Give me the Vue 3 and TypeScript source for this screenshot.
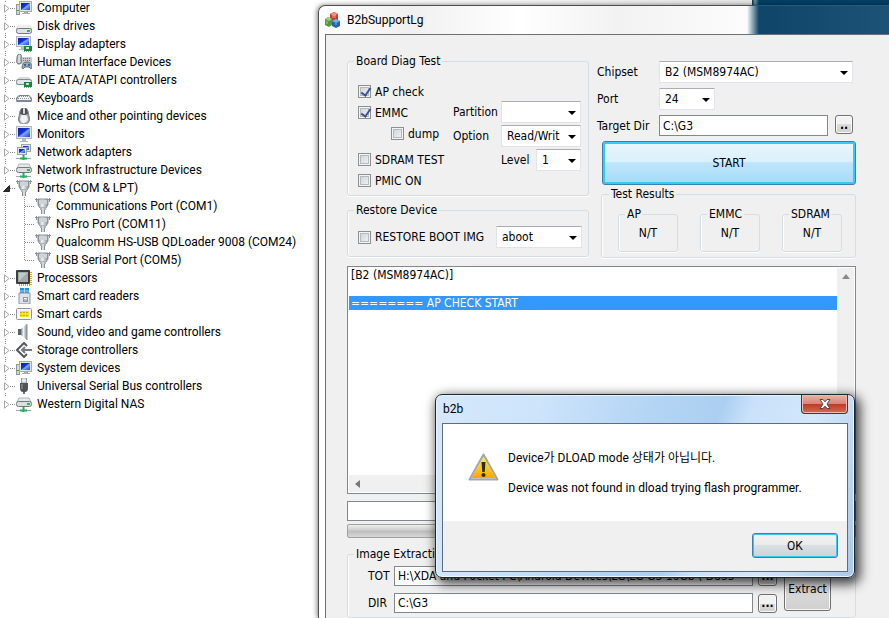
<script setup lang="ts">
import { ref } from 'vue'

interface Device {
  name: string
  icon: string
  children?: string[]
}

const devices: Device[] = [
  { name: 'Computer', icon: 'computer' },
  { name: 'Disk drives', icon: 'disk' },
  { name: 'Display adapters', icon: 'display' },
  { name: 'Human Interface Devices', icon: 'hid' },
  { name: 'IDE ATA/ATAPI controllers', icon: 'ide' },
  { name: 'Keyboards', icon: 'keyboard' },
  { name: 'Mice and other pointing devices', icon: 'mouse' },
  { name: 'Monitors', icon: 'monitor' },
  { name: 'Network adapters', icon: 'network' },
  { name: 'Network Infrastructure Devices', icon: 'netdrive' },
  {
    name: 'Ports (COM & LPT)',
    icon: 'port',
    children: [
      'Communications Port (COM1)',
      'NsPro Port (COM11)',
      'Qualcomm HS-USB QDLoader 9008 (COM24)',
      'USB Serial Port (COM5)',
    ],
  },
  { name: 'Processors', icon: 'cpu' },
  { name: 'Smart card readers', icon: 'reader' },
  { name: 'Smart cards', icon: 'card' },
  { name: 'Sound, video and game controllers', icon: 'sound' },
  { name: 'Storage controllers', icon: 'storage' },
  { name: 'System devices', icon: 'computer' },
  { name: 'Universal Serial Bus controllers', icon: 'usb' },
  { name: 'Western Digital NAS', icon: 'netdrive' },
]

const results = ['AP', 'EMMC', 'SDRAM']
const apCheck = ref(true)
const emmc = ref(true)
const dump = ref(false)
const sdram = ref(false)
const pmic = ref(false)
const restore = ref(false)
const targetDir = ref('C:\\G3')
const command = ref('')
const totPath = ref('H:\\XDA and Pocket PC\\Android Devices\\LG\\LG G3 16Gb ( D855')
const outDir = ref('C:\\G3')
</script>

<template>
  <svg class="defs" aria-hidden="true">
    <defs>
      <linearGradient id="scr" x1="0" y1="0" x2="1" y2="1">
        <stop offset="0" stop-color="#0a1fae" /><stop offset=".45" stop-color="#1437d6" />
        <stop offset=".55" stop-color="#7fa8f5" /><stop offset="1" stop-color="#1a3fd8" />
      </linearGradient>
      <linearGradient id="metal" x1="0" y1="0" x2="1" y2="0">
        <stop offset="0" stop-color="#7b838a" /><stop offset=".4" stop-color="#f2f5f7" /><stop offset="1" stop-color="#858c92" />
      </linearGradient>
      <linearGradient id="warn" x1="0" y1="0" x2="0" y2="1">
        <stop offset="0" stop-color="#fff03a" /><stop offset="1" stop-color="#f9a800" />
      </linearGradient>
    </defs>
    <symbol id="monitor" viewBox="0 0 16 16">
      <rect x=".5" y=".5" width="15" height="12" fill="#e4e6e8" stroke="#b4b8bb" />
      <rect x="2" y="2" width="12" height="9" fill="url(#scr)" />
      <path d="M6 13h4v2h2v1H4v-1h2z" fill="#b5babd" />
    </symbol>
    <symbol id="computer" viewBox="0 0 16 16">
      <rect x=".5" y="4.500" width="3" height="10" fill="#d4d8da" stroke="#8e9599" />
      <rect x="1" y="10" width="2" height="1" fill="#27a84a" />
      <rect x="3.500" y="1.500" width="12" height="10" fill="#e2e5e7" stroke="#a6abb0" />
      <rect x="5" y="3" width="9" height="7" fill="url(#scr)" />
      <path d="M8 12h4v1h2v1H6v-1h2z" fill="#a9aeb2" />
    </symbol>
    <symbol id="disk" viewBox="0 0 16 16">
      <path d="M3 7h10l3 3v5H0v-5z" fill="#ccd0d2" />
      <path d="M3 7h10l2 3H1z" fill="#eceeef" />
      <rect x=".5" y="10.500" width="15" height="5" rx="2" fill="#dfe2e3" stroke="#74797d" />
      <rect x="11" y="12" width="3" height="2" fill="#21c13b" />
    </symbol>
    <symbol id="chip" viewBox="0 0 16 16">
      <rect x="8" y="10" width="8" height="5" fill="#168743" />
      <rect x="10" y="11" width="3" height="2" fill="#c7e4cd" />
      <path d="M8 15.500h7" stroke="#9e9b45" stroke-dasharray="1 1" />
    </symbol>
    <symbol id="display" viewBox="0 0 16 16">
      <rect x=".5" y=".5" width="14" height="10" fill="#e4e6e8" stroke="#b4b8bb" />
      <rect x="2" y="2" width="11" height="7" fill="url(#scr)" />
      <path d="M5 11h4v2h2v1H3v-1h2z" fill="#b5babd" />
      <use href="#chip" />
    </symbol>
    <symbol id="ide" viewBox="0 0 16 16">
      <path d="M3 5h10l3 3v5H0V8z" fill="#d9dcde" />
      <rect x=".5" y="7.500" width="15" height="5" rx="2" fill="#e4e6e7" stroke="#83888c" />
      <use href="#chip" />
    </symbol>
    <symbol id="hid" viewBox="0 0 16 16">
      <path d="M6 3h10v7H5z" fill="#c4cacf" />
      <path d="M7 4.500h8M7 6.500h8" stroke="#777e85" stroke-dasharray="1 1" />
      <path d="M1 5Q1 0 3.500 0T5 5q1 5-2 5T1 5z" fill="#d8dadd" stroke="#555a60" />
      <path d="M6 14q0-6 5-6t5 6q-1 2-3-1H9q-2 3-3 1z" fill="#9fa9b2" stroke="#67727c" />
      <path d="M8 11h2M12 11h2" stroke="#2b6ba0" stroke-width="2" />
    </symbol>
    <symbol id="keyboard" viewBox="0 0 16 16">
      <path d="M3 5h10l3 3v2q0 2-1 2H1q-1 0-1-2V8z" fill="#7f868b" />
      <path d="M3 6h10l2 4H1z" fill="#f4f5f6" />
      <path d="M3 6.500h10M2 8.500h12" stroke="#8b9297" stroke-dasharray="1 1" />
    </symbol>
    <symbol id="mouse" viewBox="0 0 16 16">
      <path d="M4 3Q5 0 8 0t4 3l1.500 8q0 5-5.500 5t-5.500-5z" fill="url(#metal)" stroke="#7c8084" />
      <path d="M5 1q3-2 6 0l1 5-3 1H7L4 6z" fill="#4b4f54" />
      <rect x="7" y="0" width="2" height="6" rx="1" fill="#d7dadd" />
      <path d="M5 8q3-2 6 0l1 4q-4 5-8 0z" fill="#eef0f1" />
    </symbol>
    <symbol id="network" viewBox="0 0 16 16">
      <rect x="5.500" y=".5" width="9" height="7" fill="#e4e8ec" stroke="#9ba3aa" />
      <rect x="7" y="2" width="6" height="4" fill="url(#scr)" />
      <rect x="1.500" y="3.500" width="9" height="7" fill="#e4e8ec" stroke="#9ba3aa" />
      <rect x="3" y="5" width="6" height="4" fill="url(#scr)" />
      <path d="M0 14.500h15" stroke="#9fa6a9" /><path d="M7.500 11v5M4 14.500h7" stroke="#22ac62" stroke-width="2" />
    </symbol>
    <symbol id="netdrive" viewBox="0 0 16 16">
      <path d="M3 2h10l2 4H1z" fill="#e6e8e9" stroke="#aeb3b6" />
      <rect x=".5" y="5.500" width="15" height="5" rx="2" fill="#dcdfe1" stroke="#70767a" />
      <rect x="11" y="7" width="3" height="2" fill="#20c13a" />
      <path d="M0 14.500h15" stroke="#9fa6a9" /><path d="M7.500 11v5M4 14.500h7" stroke="#20b060" stroke-width="2" />
    </symbol>
    <symbol id="port" viewBox="0 0 16 16">
      <path d="M0 1.500h16M1.500 0v4M14.500 0v4" stroke="#8b9297" />
      <path d="M3 1h10v6l-2 3H5L3 7z" fill="url(#metal)" stroke="#8c9397" />
      <path d="M4 2h8v4H4z" fill="#cdd3d7" />
      <path d="M5 9h6v3H5z" fill="#adb4b9" /><path d="M6 12h4v4H6z" fill="#8a9196" /><path d="M7 10h2v6H7z" fill="#d3d8db" />
    </symbol>
    <symbol id="cpu" viewBox="0 0 16 16">
      <path d="M15 2v13M3 15h12" stroke="#d0a13d" stroke-width="2" stroke-dasharray="1 1" />
      <rect width="14" height="14" rx="1" fill="#3c3f42" />
      <path d="M2 2h10v10H2z" fill="#a5a9ab" /><path d="M3 3h8L3 11z" fill="#c4c7c9" />
    </symbol>
    <symbol id="reader" viewBox="0 0 16 16">
      <rect x="4" y="0" width="9" height="6" fill="#258fd6" /><path d="M4 3h9M8.500 0v5" stroke="#9ad8fa" />
      <path d="M3 5h11v11H3z" fill="#dfe4e9" stroke="#8795a2" />
      <rect x="7.500" y="9.500" width="4" height="4" fill="#fff" stroke="#8b96a0" /><path d="M8 12h3" stroke="#667481" />
    </symbol>
    <symbol id="card" viewBox="0 0 16 16">
      <rect x=".5" y="2.500" width="15" height="11" rx="1" fill="#f4f4f4" stroke="#8f9498" />
      <rect x="4" y="5" width="9" height="6" fill="#f4e61c" />
      <path d="M4 6.500h9M4 9.500h9" stroke="#c2ad1b" stroke-dasharray="2 1" />
    </symbol>
    <symbol id="sound" viewBox="0 0 16 16">
      <path d="M2 5h3v6H2z" fill="#596168" /><path d="M5 5l6-5v16l-6-5z" fill="url(#metal)" /><path d="M11 0v16" stroke="#8b9299" />
    </symbol>
    <symbol id="storage" viewBox="0 0 16 16">
      <path d="M11 4L8 1 1 8l7 7 3-3" fill="none" stroke="#56595c" stroke-width="2" />
      <path d="M6 8h10M9 5L6 8l3 3" fill="none" stroke="#777b7f" stroke-width="2" />
    </symbol>
    <symbol id="usb" viewBox="0 0 16 16">
      <path d="M5.500 0h5v5h-5z" fill="#e5e8ea" stroke="#979da1" /><path d="M4 5h8v5q0 4-3 4H7q-3 0-3-4z" fill="#505357" />
      <path d="M6 6v5" stroke="#989ca0" /><path d="M8 14v2" stroke="#6b7074" stroke-width="2" />
    </symbol>
  </svg>

  <div class="desktop">
    <nav class="tree" aria-label="Devices">
      <ul>
        <li v-for="d in devices" :key="d.name">
          <div class="node">
            <button class="twist" :aria-label="d.name">
              <svg viewBox="0 0 7 9">
                <path v-if="d.children" d="M6.500 1.500v6H.5z" fill="#333" stroke="#222" />
                <path v-else d="M1.500 .8l4.500 3.700-4.500 3.700z" fill="#fff" stroke="#a5a5a5" />
              </svg>
            </button>
            <i class="stem"></i>
            <svg class="icon"><use :href="'#' + d.icon" /></svg>
            <span>{{ d.name }}</span>
          </div>
          <ul v-if="d.children" class="kids">
            <li v-for="c in d.children" :key="c" class="node">
              <i class="stem long"></i>
              <svg class="icon"><use href="#port" /></svg>
              <span>{{ c }}</span>
            </li>
          </ul>
        </li>
      </ul>
    </nav>

    <div class="stage">
      <div class="backdrop"></div>
      <main class="app">
        <header class="titlebar">
          <svg class="logo" viewBox="0 0 16 16">
            <path d="M5 2l4-2 4 2v6l-4 2-4-2z" fill="#cc3b2c" /><path d="M5 2l4-2 4 2-4 2z" fill="#f08b74" />
            <path d="M0 7l3-2 4 2v6l-3 2-4-2z" fill="#4c9b3f" /><path d="M0 7l3-2 4 2-3 2z" fill="#9bd37e" />
            <path d="M7 9l4-2 4 2v5l-4 2-4-2z" fill="#2267a8" /><path d="M7 9l4-2 4 2-4 2z" fill="#75b5e4" />
            <path d="M8 3v3M10 3v3M2 9v3M10 12h2" stroke="#fff" stroke-opacity=".5" />
          </svg>
          <span>B2bSupportLg</span>
        </header>
        <div class="client">
          <div class="top">
            <div class="left">
              <fieldset class="group board">
                <legend>Board Diag Test</legend>
                <div class="checks">
                  <label><input v-model="apCheck" type="checkbox" />AP check</label>
                  <label><input v-model="emmc" type="checkbox" />EMMC</label>
                  <label class="sub"><input v-model="dump" type="checkbox" />dump</label>
                  <label><input v-model="sdram" type="checkbox" />SDRAM TEST</label>
                  <label><input v-model="pmic" type="checkbox" />PMIC ON</label>
                </div>
                <div class="picks">
                  <div class="pick"><label for="partition">Partition</label><span class="combo"><select id="partition"><option></option></select></span></div>
                  <div class="pick"><label for="option">Option</label><span class="combo"><select id="option"><option>Read/Writ</option></select></span></div>
                  <div class="pick short"><label for="level">Level</label><span class="combo"><select id="level"><option>1</option></select></span></div>
                </div>
              </fieldset>
              <fieldset class="group restore">
                <legend>Restore Device</legend>
                <label><input v-model="restore" type="checkbox" />RESTORE BOOT IMG</label>
                <span class="combo"><select aria-label="Boot image"><option>aboot</option></select></span>
              </fieldset>
            </div>
            <div class="right">
              <div class="form">
                <label for="chipset">Chipset</label>
                <span class="combo"><select id="chipset"><option>B2 (MSM8974AC)</option></select></span>
                <label for="port-no">Port</label>
                <span class="combo small"><select id="port-no"><option>24</option></select></span>
                <label for="target">Target Dir</label>
                <div class="path"><input id="target" v-model="targetDir" type="text" /><button class="btn dots">..</button></div>
              </div>
              <button class="btn start">START</button>
              <fieldset class="group results">
                <legend>Test Results</legend>
                <fieldset v-for="r in results" :key="r" class="group result">
                  <legend>{{ r }}</legend>
                  N/T
                </fieldset>
              </fieldset>
            </div>
          </div>

          <div class="log">
            <ul>
              <li>[B2 (MSM8974AC)]</li>
              <li></li>
              <li class="picked">======== AP CHECK START</li>
            </ul>
            <div class="vbar"><svg viewBox="0 0 8 5"><path d="M0 5l4-5 4 5z" fill="#8a8a8a" /></svg></div>
            <div class="hbar"><svg viewBox="0 0 5 8"><path d="M5 0L0 4l5 4z" fill="#777" /></svg></div>
          </div>
          <input v-model="command" class="command" type="text" aria-label="Command" />
          <div class="progress" role="progressbar" aria-label="Progress"></div>
          <fieldset class="group extraction">
            <legend>Image Extraction</legend>
            <div class="files">
              <label for="tot">TOT</label><input id="tot" v-model="totPath" type="text" /><button class="btn dots">...</button>
              <label for="dir">DIR</label><input id="dir" v-model="outDir" type="text" /><button class="btn dots">...</button>
            </div>
            <button class="btn extract">Extract</button>
          </fieldset>
        </div>
      </main>
    </div>

    <section class="dialog" role="dialog" aria-labelledby="dialog-title">
      <header>
        <span id="dialog-title">b2b</span>
        <button class="close" aria-label="Close">
          <svg viewBox="0 0 12 10"><path d="M1 .5h3l2 2.300L8 .5h3L8 5l3 4.500H8L6 7.200 4 9.500H1L4 5z" fill="#fff" stroke="#5b4048" /></svg>
        </button>
      </header>
      <div class="pane">
        <div class="message">
          <svg class="warning" viewBox="0 0 31 28">
            <path d="M15.500 1.500L29.500 26.500h-28z" fill="#ddd" stroke="#a6a6a6" stroke-width="2" stroke-linejoin="round" />
            <path d="M15.500 4L27.500 25h-24z" fill="url(#warn)" />
            <path d="M13.500 9h4l-.8 10h-2.400z" fill="#302b13" /><circle cx="15.500" cy="22" r="2" fill="#302b13" />
          </svg>
          <div>
            <p>Device가 DLOAD mode 상태가 아닙니다.</p>
            <p>Device was not found in dload trying flash programmer.</p>
          </div>
        </div>
        <footer><button class="btn ok">OK</button></footer>
      </div>
    </section>
  </div>
</template>

<style>
body { margin: 0; background: #fff; }
</style>

<style scoped>
* { box-sizing: border-box; }
ul, p { margin: 0; padding: 0; list-style: none; }
button, input, select { font: inherit; color: inherit; margin: 0; }
.defs { position: absolute; width: 0; height: 0; }
.desktop {
  position: relative;
  display: flex;
  height: 100vh;
  overflow: hidden;
  color: #000;
  font: 12px/14px "DejaVu Sans Condensed", "DejaVu Sans", sans-serif;
}

.tree { flex: 0 0 318px; font: 12px/18px Roboto, "Open Sans", sans-serif; white-space: nowrap; }
.tree > ul { margin-top: -1px; background: repeating-linear-gradient(#888 0 1px, transparent 1px 2px) 5px 0 / 1px 398px no-repeat; }
.node { display: flex; align-items: center; height: 18px; }
.twist { display: flex; width: 10px; height: 11px; padding: 1px 0 0 3px; border: 0; background: #fff; }
.twist svg { width: 7px; height: 9px; }
.stem { width: 6px; height: 1px; background: repeating-linear-gradient(90deg, #888 0 1px, transparent 1px 2px); }
.stem.long { width: 10px; }
.icon { width: 16px; height: 16px; margin-right: 5px; }
.kids { padding-left: 25px; background: repeating-linear-gradient(#888 0 1px, transparent 1px 2px) 24px 0 / 1px 63px no-repeat; }

.stage { flex: 1; min-width: 0; display: flex; flex-direction: column; }
.backdrop { flex: none; height: 5px; background: linear-gradient(90deg, #fff 0, #e6e6e6 calc(100% - 137px), #05283e calc(100% - 137px), #6695b0 calc(100% - 134px), #034064 calc(100% - 130px)); }
.app {
  flex: 1 1 0;
  min-height: 0;
  border: 1px solid #4d5052;
  border-width: 1px 0 0 1px;
  border-radius: 7px 0 0 0;
  padding-left: 6px;
  background: linear-gradient(90deg, #fff 0, #f0f0f0 90px, #fff 200px, #f2f2f2 300px, #fcfcfc calc(100% - 142px), #0e4568 calc(100% - 130px), #1b5275);
  box-shadow: -1px 0 5px rgba(0, 0, 0, .5);
}
.titlebar { display: flex; align-items: center; height: 28px; gap: 6px; font: 12px/18px Roboto, "Open Sans", sans-serif; }
.logo { width: 16px; height: 16px; }
.client { height: 100%; border: 1px solid #6c7072; border-right: 0; padding: 19px 33px 0 21px; background: #f0f0f0; }
.top { display: grid; grid-template-columns: 242px 1fr; gap: 8px; }

.group { --pad: 0px; min-width: 0; margin: 0; padding: 0 0 0 var(--pad); border: 1px solid #d3dde6; border-radius: 3px; box-shadow: inset 1px 0 #fff, 0 1px #fff; }
.group legend { margin-left: calc(6px - var(--pad)); padding: 0 2px; line-height: 14px; }
.board { --pad: 10px; display: flex; height: 142px; padding-right: 7px; }
.checks { flex: 1; padding-top: 13px; }
.checks label { height: 21px; }
.checks .sub { margin: 0 0 5px 33px; }
.left label { display: flex; align-items: center; gap: 4px; white-space: nowrap; }
input[type="checkbox"] {
  position: relative;
  flex: none;
  appearance: none;
  width: 13px;
  height: 13px;
  border: 1px solid #8e8f8f;
  background: linear-gradient(135deg, #cbcfd5, #f6f6f6);
  box-shadow: inset 0 0 0 1px #f4f4f4, inset 0 0 0 2px #b5bac0;
}
input[type="checkbox"]:checked::after {
  content: "";
  position: absolute;
  left: 4px;
  top: 0;
  width: 4px;
  height: 8px;
  border: solid #3d5294;
  border-width: 0 2px 2px 0;
  transform: rotate(35deg);
}
.picks { display: grid; align-content: start; gap: 2px; width: 128px; padding-top: 33px; }
.pick { display: grid; grid-template-columns: 48px 80px; }
.pick.short { grid-template-columns: 35px 45px; justify-content: end; }
.combo { position: relative; display: block; height: 22px; }
.combo::after { content: ""; position: absolute; right: 5px; top: 10px; border: 4px solid transparent; border-top-color: #000; border-bottom: 0; }
.combo select { appearance: none; width: 100%; height: 100%; padding: 0 0 1px 5px; border: 1px solid #e2e3ea; border-top-color: #abadb3; border-radius: 1px; background: #fff; }
.restore { --pad: 10px; display: flex; height: 54px; margin-top: 7px; padding-top: 9px; padding-right: 6px; justify-content: space-between; }
.restore label { height: 22px; }
.restore .combo { width: 86px; }

.right { padding-top: 7px; }
.form { display: grid; grid-template-columns: 62px 1fr; gap: 5px 0; align-items: center; padding-right: 3px; }
.small { width: 56px; }
input[type="text"] { width: 100%; min-width: 0; height: 21px; padding: 0 0 0 3px; border: 1px solid #828790; border-radius: 0; background: #fff; }
.path { display: flex; gap: 7px; }
.btn { padding: 0; border: 1px solid #707070; border-radius: 3px; background: linear-gradient(#f2f2f2 0 50%, #dddddd 50%, #cfcfcf); box-shadow: inset 0 0 0 1px #fafafa; }
.dots { flex: none; width: 18px; height: 19px; line-height: 16px; font-weight: bold; }
.start { display: block; width: calc(100% - 5px); height: 44px; margin: 5px 0 0 5px; border-color: #3c7fb1; background: linear-gradient(#eaf6fd, #d9f0fc 48%, #bee6fd 49%, #a7d9f5); box-shadow: inset 0 0 0 2px #38c8f4; }
.results { --pad: 16px; display: flex; justify-content: space-between; height: 71px; margin: 2px 0 0 4px; padding-right: 13px; }
.results > legend { margin-left: -9px; }
.result { width: 60px; height: 45px; margin-top: 6px; padding-top: 5px; text-align: center; }
.result legend { text-align: left; }

.log { display: grid; grid-template: 1fr 17px / 1fr 17px; height: 228px; margin-top: 8px; border: 1px solid #828790; padding: 1px; background: #fff; }
.log li { height: 14px; padding-left: 2px; }
.picked { color: #fff; background: #3399ff; }
.vbar, .hbar { display: flex; background: #f0f0f0; }
.vbar { grid-row: 1 / 3; grid-column: 2; justify-content: center; padding-top: 6px; }
.hbar { align-items: center; padding-left: 6px; }
.vbar svg { width: 8px; height: 5px; }
.hbar svg { width: 5px; height: 8px; }
.client > .command { display: block; height: 20px; margin-top: 7px; }
.progress { height: 14px; margin-top: 3px; border: 1px solid #a0a0a0; border-radius: 2px; background: linear-gradient(#eee, #ccc 45%, #bcbcbc 50%, #d8d8d8); }
.extraction { --pad: 20px; display: flex; gap: 7px; height: 71px; margin-top: 9px; padding-top: 5px; padding-right: 24px; }
.files { flex: 1; display: grid; grid-template-columns: 26px 1fr 19px; grid-auto-rows: 20px; align-content: start; align-items: center; gap: 7px 0; }
.files input[type="text"] { height: 20px; width: calc(100% - 5px); }
.files .dots { width: 19px; }
.extract { width: 47px; height: 45px; }

.dialog {
  position: absolute;
  left: 435px;
  top: 394px;
  width: 420px;
  padding: 0 6px 5px;
  border: 1px solid #1c2633;
  border-radius: 7px;
  background: linear-gradient(110deg, #d6e8fb 0, #cde4fb 22%, #b4d5f4 45%, #accff1 60%, #c9e1fa 66%, #d3e7fb 80%, #a9c8e6);
  box-shadow: inset 0 0 0 1px #eaf5ff, 3px 4px 12px 2px rgba(0, 0, 0, .75);
  font: 12px/18px Roboto, "Open Sans", "Noto Sans CJK KR", sans-serif;
}
.dialog header { display: flex; justify-content: space-between; height: 28px; padding-left: 1px; line-height: 28px; }
.close { display: flex; align-items: center; justify-content: center; width: 47px; height: 19px; padding: 0; border: 1px solid #572c35; border-top: 0; border-radius: 0 0 4px 4px; background: linear-gradient(#eab2a8, #d98478 48%, #bd3a25 50%, #d66a50); box-shadow: inset 0 0 0 1px #f0bcb3; }
.close svg { width: 12px; height: 10px; }
.pane { border: 1px solid #5b6d7f; background: #fff; }
.message { display: flex; gap: 9px; height: 97px; padding: 25px 0 0 25px; }
.message p { margin-bottom: 12px; white-space: nowrap; }
.warning { width: 31px; height: 28px; margin-top: 4px; }
.dialog footer { display: flex; justify-content: flex-end; padding: 12px 9px 13px; background: #f0f0f0; }
.ok { width: 86px; height: 25px; border-color: #3c7fb1; background: linear-gradient(#f2f2f2, #ebebeb 48%, #d9dfe3 50%, #cdd5da); box-shadow: inset 0 0 0 1px #38c8f4; }
</style>
